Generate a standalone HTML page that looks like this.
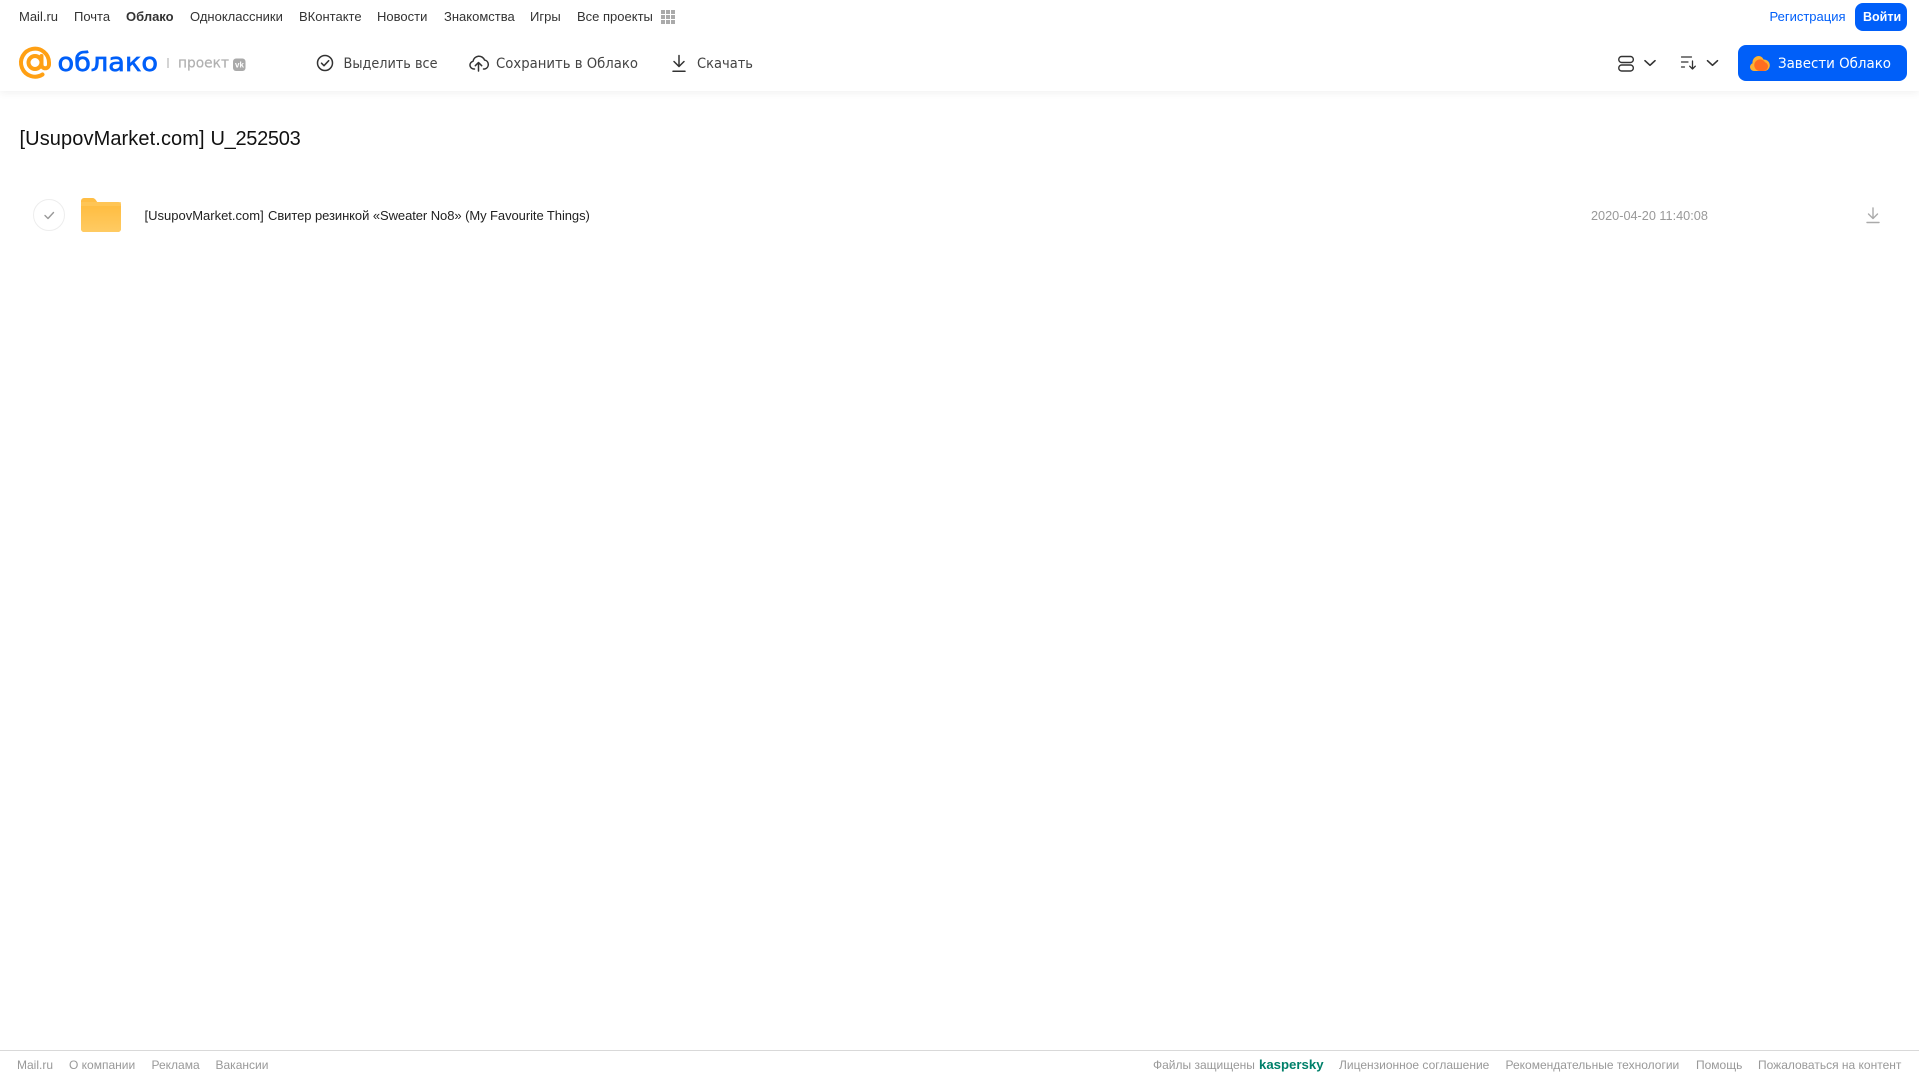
<!DOCTYPE html>
<html lang="ru">
<head>
<meta charset="utf-8">
<title>[UsupovMarket.com] U_252503</title>
<style>
html,body{margin:0;padding:0;width:1919px;height:1079px;overflow:hidden;background:#fff}
body{position:relative;font-family:"Liberation Sans",Arial,sans-serif}
.t{position:absolute;white-space:nowrap;line-height:20px;height:20px}
.n{top:7px;font-size:13px;color:#333}
.f{top:1055px;font-size:12px;color:#999}
#hdr{position:absolute;left:0;top:0;width:1919px;height:91px;background:#fff;box-shadow:0 2px 8px rgba(0,0,0,.06)}
.btn{position:absolute;background:#005ff9;border-radius:8px}
svg{position:absolute;left:0;top:0}
</style>
</head>
<body>
<div id="hdr"></div>
<div class="btn" style="left:1855px;top:3px;width:52px;height:28px"></div>
<div class="btn" style="left:1738px;top:45px;width:169px;height:36px"></div>

<span class="t n" style="left:19px">Mail.ru</span>
<span class="t n" style="left:74px">Почта</span>
<span class="t n" style="left:126px;font-weight:bold">Облако</span>
<span class="t n" style="left:190px">Одноклассники</span>
<span class="t n" style="left:299px">ВКонтакте</span>
<span class="t n" style="left:377px">Новости</span>
<span class="t n" style="left:444px">Знакомства</span>
<span class="t n" style="left:530px">Игры</span>
<span class="t n" style="left:577px">Все проекты</span>
<span class="t n" style="left:1769.500px;color:#005ff9">Регистрация</span>
<span class="t n" style="left:1863px;color:#fff;font-weight:bold;font-size:12.500px">Войти</span>

<span class="t" style="left:19.500px;top:129px;font-size:20px;color:#111;letter-spacing:.1px">[UsupovMarket.com]</span>
<span class="t" style="left:210.500px;top:129px;font-size:20px;color:#111;letter-spacing:-.3px">U_252503</span>
<span class="t" style="left:144.500px;top:206px;font-size:13px;color:#222">[UsupovMarket.com]</span>
<span class="t" style="left:268px;top:206px;font-size:13px;color:#222;letter-spacing:-.07px">Свитер резинкой «Sweater No8» (My Favourite Things)</span>
<span class="t" style="left:1591px;top:206px;font-size:12.700px;color:#999">2020-04-20 11:40:08</span>

<div style="position:absolute;left:0;top:1050px;width:1919px;height:1px;background:#d9d9d9"></div>
<span class="t f" style="left:17px">Mail.ru</span>
<span class="t f" style="left:69px">О компании</span>
<span class="t f" style="left:151.500px">Реклама</span>
<span class="t f" style="left:215.500px">Вакансии</span>
<span class="t f" style="left:1153px">Файлы защищены</span>
<span class="t f" style="left:1259px;font-size:13.200px;font-weight:bold;color:#00806a">kaspersky</span>
<span class="t f" style="left:1339px">Лицензионное соглашение</span>
<span class="t f" style="left:1505.500px">Рекомендательные технологии</span>
<span class="t f" style="left:1696px">Помощь</span>
<span class="t f" style="left:1758px">Пожаловаться на контент</span>

<svg width="1919" height="1079" viewBox="0 0 1919 1079" fill="none">
  <!-- apps grid -->
  <g fill="#aaa">
    <rect x="661" y="10" width="4" height="4"/><rect x="666" y="10" width="4" height="4"/><rect x="671" y="10" width="4" height="4"/>
    <rect x="661" y="15" width="4" height="4"/><rect x="666" y="15" width="4" height="4"/><rect x="671" y="15" width="4" height="4"/>
    <rect x="661" y="20" width="4" height="4"/><rect x="666" y="20" width="4" height="4"/><rect x="671" y="20" width="4" height="4"/>
  </g>
  <!-- logo -->
  <g stroke="#ffa014" stroke-width="4" stroke-linecap="round">
    <circle cx="35" cy="62.500" r="6.500"/>
    <path d="M41.500 56v8.500a3.750 3.750 0 0 0 7.500 0v-2a14 14 0 1 0-6.500 12"/>
  </g>
  <text x="57.500" y="71" font-family="DejaVu Sans" font-size="26" fill="#005ff9" stroke="#005ff9" stroke-width=".7" textLength="100.500" lengthAdjust="spacingAndGlyphs">облако</text>
  <rect x="167.500" y="58" width="1" height="10" fill="#aaa"/>
  <text x="178" y="67.500" font-family="DejaVu Sans" font-size="14" fill="#b0b0b0" stroke="#b0b0b0" stroke-width=".2" textLength="51" lengthAdjust="spacingAndGlyphs">проект</text>
  <rect x="233" y="58.500" width="12.500" height="12.500" rx="3" fill="#aaa"/>
  <text x="235" y="67.500" font-family="Liberation Sans" font-size="8" font-weight="bold" fill="#fff">vk</text>

  <!-- toolbar -->
  <g stroke="#333" stroke-width="1.500" stroke-linecap="round" stroke-linejoin="round">
    <circle cx="325" cy="63" r="7.500"/>
    <path d="M321.500 63.200l2.500 2.500 4.700-5"/>
    <path d="M474.500 69h-.7a3.900 3.900 0 0 1-.8-7.700 6 6 0 0 1 11.500-1.300 4.600 4.600 0 0 1 .3 9h-1.300"/>
    <path d="M478.500 71v-8.500m-3.200 3.200l3.200-3.200 3.200 3.200"/>
    <path d="M679 55.500v11m-5-5l5 5 5-5M673 71.200h12"/>
    <rect x="1618.800" y="56.500" width="14.500" height="6" rx="2.800" stroke-width="1.400"/>
    <rect x="1618.800" y="65" width="14.500" height="6" rx="2.800" stroke-width="1.400"/>
    <path d="M1645 60.700l5 4.600 5-4.600" stroke-width="1.600"/>
    <path d="M1681.500 57h10M1681.500 62h6.500M1681.500 67h3" stroke-width="1.200"/>
    <path d="M1692.500 61v8m-2.800-2.800l2.800 2.800 2.800-2.800" stroke-width="1.300"/>
    <path d="M1707.500 60.700l5 4.600 5-4.600" stroke-width="1.600"/>
  </g>
  <g font-family="DejaVu Sans" font-size="14" fill="#444">
    <text x="343.500" y="68" textLength="94" lengthAdjust="spacingAndGlyphs">Выделить все</text>
    <text x="496" y="68" textLength="142" lengthAdjust="spacingAndGlyphs">Сохранить в Облако</text>
    <text x="697" y="68" textLength="56" lengthAdjust="spacingAndGlyphs">Скачать</text>
    <text x="1778" y="68" textLength="113" lengthAdjust="spacingAndGlyphs" fill="#fff">Завести Облако</text>
  </g>
  <!-- button cloud -->
  <g transform="translate(-1 0)">
    <path d="M1755 71a4 4 0 0 1-1.500-7.700 6.500 6.500 0 0 1 6.500-7.300 5.500 5.500 0 0 1 4.500 3.500 5.500 5.500 0 0 1 1 11.500z" fill="#ffb12e"/>
    <path d="M1761 71a5.800 5.800 0 1 1 5-8.800 4.500 4.500 0 0 1 3 4.300 4.500 4.500 0 0 1-4.500 4.500z" fill="#ff6d1f"/>
  </g>

  <!-- row -->
  <circle cx="49" cy="215" r="15.500" stroke="#ededed" stroke-width="1" fill="#fff"/>
  <path d="M45 215.500l3 3 5.500-6" stroke="#999" stroke-width="1.400" stroke-linecap="round" stroke-linejoin="round"/>
  <defs>
    <linearGradient id="fg" x1="0" y1="0" x2="0" y2="1">
      <stop offset="0" stop-color="#ffbd42"/>
      <stop offset="1" stop-color="#ffcb63"/>
    </linearGradient>
  </defs>
  <path d="M81 201a3 3 0 0 1 3-3h8.500c1.500 0 2.500 .8 3.500 2.200l1.200 1.800H118a3 3 0 0 1 3 3v24a3 3 0 0 1-3 3H84a3 3 0 0 1-3-3z" fill="#ffbe45"/>
  <path d="M81 206h40v23a3 3 0 0 1-3 3H84a3 3 0 0 1-3-3z" fill="url(#fg)"/>
  <path d="M81 202h40v4H81z" fill="#ffc75c" opacity=".7"/>
  <path d="M1873 208v10.500m-4.500-4.500l4.500 4.500 4.500-4.500M1867 222.500h12" stroke="#aaa" stroke-width="1.400" stroke-linecap="round" stroke-linejoin="round"/>
</svg>
</body>
</html>
